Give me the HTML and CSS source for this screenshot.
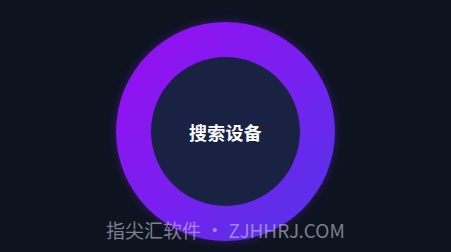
FILE: index.html
```html
<!DOCTYPE html>
<html lang="zh">
<head>
<meta charset="utf-8">
<link rel="stylesheet" href="styles.css">
</head>
<body>
<main class="stage">
  <div class="ring">
    <div class="core">
      <span class="label">搜索设备</span>
    </div>
  </div>
  <div class="watermark">指尖汇软件 • ZJHHRJ.COM</div>
</main>
</body>
</html>
```
FILE: styles.css
```css
html, body {
  margin: 0;
  padding: 0;
  width: 451px;
  height: 252px;
  overflow: hidden;
  background: #0e1320;
}
.stage {
  position: relative;
  width: 451px;
  height: 252px;
  display: flex;
  justify-content: center;
  align-items: flex-start;
  padding-top: 22px;
  box-sizing: border-box;
}
.ring {
  width: 219px;
  height: 219px;
  border-radius: 50%;
  background: linear-gradient(135deg, #9a0cf0 0%, #7a1ff0 50%, #4f36e6 100%);
  box-shadow: 0 0 10px rgba(120, 40, 240, 0.35);
  display: flex;
  align-items: center;
  justify-content: center;
}
.core {
  width: 149px;
  height: 149px;
  border-radius: 50%;
  background: #1a2244;
  display: flex;
  align-items: center;
  justify-content: center;
}
.label {
  font-family: "Noto Sans CJK SC", "Noto Sans", sans-serif;
  font-weight: 700;
  font-size: 18px;
  color: #ffffff;
  letter-spacing: 0.3px;
}
.watermark {
  position: absolute;
  left: 0;
  right: 0;
  top: 216px;
  text-align: center;
  font-family: "Noto Sans CJK SC", "Noto Sans", sans-serif;
  font-size: 19px;
  color: rgba(200, 200, 215, 0.6);
  white-space: nowrap;
}
```
